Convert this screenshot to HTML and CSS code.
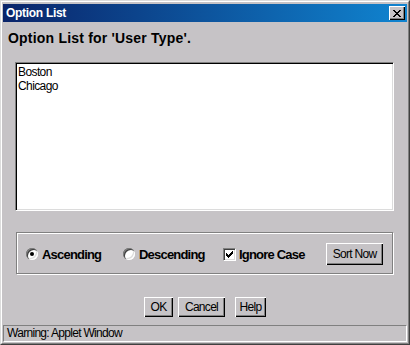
FILE: index.html
```html
<!DOCTYPE html>
<html lang="en">
<head>
	<meta charset="UTF-8">
	<title>Option List</title>
	<link rel="stylesheet" href="styles.css">
</head>
<body>
	<div class="window">
		<div class="frame">
			<div class="titlebar">
				<span class="title">Option List</span>
				<span class="close">
					<svg width="8" height="7" viewBox="0 0 8 7"><path d="M0 0h2v1H0z M6 0h2v1H6z M1 1h2v1H1z M5 1h2v1H5z M2 2h4v1H2z M3 3h2v1H3z M2 4h4v1H2z M1 5h2v1H1z M5 5h2v1H5z M0 6h2v1H0z M6 6h2v1H6z" fill="#000"/></svg>
				</span>
			</div>
			<div class="body">
				<h1 class="heading">Option List for 'User Type'.</h1>
				<div class="listbox">
					<div class="item">Boston</div>
					<div class="item">Chicago</div>
				</div>
				<div class="sortpanel">
					<label class="opt"><span class="radio checked"></span>Ascending</label>
					<label class="opt"><span class="radio"></span>Descending</label>
					<label class="opt"><span class="check"><svg width="7" height="7" viewBox="0 0 7 7"><path d="M6 0h1v1H6z M5 1h2v1H5z M0 2h1v1H0z M4 2h3v1H4z M0 3h2v1H0z M3 3h3v1H3z M0 4h5v1H0z M1 5h3v1H1z M2 6h1v1H2z" fill="#000"/></svg></span>Ignore Case</label>
					<button class="btn btn-sort">Sort Now</button>
				</div>
				<div class="actions">
					<button class="btn btn-ok">OK</button>
					<button class="btn btn-cancel">Cancel</button>
					<button class="btn btn-help">Help</button>
				</div>
			</div>
			<div class="status">Warning: Applet Window</div>
		</div>
	</div>
</body>
</html>
```

FILE: styles.css
```css
body{margin:0;font-family:"Liberation Sans",Arial,sans-serif;}

.window{width:410px;height:345px;box-sizing:border-box;border:1px solid;border-color:#dcdcdc #404040 #404040 #dcdcdc;}
.frame{height:100%;box-sizing:border-box;border:1px solid;border-color:#fff #808080 #808080 #fff;padding:2px 1px 1px 1px;display:flex;flex-direction:column;background:#c6c3c6;}

/* title bar */
.titlebar{height:18px;flex:none;display:flex;align-items:center;justify-content:space-between;padding:0 2px 0 3px;background:linear-gradient(to right,#0a246a,#1084d0);}
.title{color:#fff;font-weight:bold;font-size:12px;line-height:18px;letter-spacing:-0.3px;}
.close{width:16px;height:14px;box-sizing:border-box;display:flex;align-items:center;justify-content:center;background:#c6c3c6;box-shadow:inset 1px 1px #fff,inset -1px -1px #000,inset -2px -2px #808080;}
.close svg{display:block;margin:0 1px 0 0;}

.body{flex:1;display:flex;flex-direction:column;}
.heading{margin:8px 0 0 5px;font-size:14px;line-height:16px;font-weight:bold;letter-spacing:0.2px;}

/* list */
.listbox{margin:16px 13px 0 12px;height:149px;box-sizing:border-box;background:#fff;border:1px solid;border-color:#808080 #fff #fff #808080;box-shadow:inset 1px 1px #000,inset -1px -1px #dcdcdc;padding:2px 2px;}
.item{font-size:12px;line-height:14px;letter-spacing:-0.6px;}

/* sort options */
.sortpanel{margin:21px 14px 0 13px;height:42px;box-sizing:border-box;border:1px solid #808080;box-shadow:inset 1px 1px #fff,1px 1px #fff;padding:2px 0 0 9px;display:grid;grid-template-columns:97px 100px 103px 57px;align-items:center;}
.opt{display:flex;align-items:center;gap:4px;font-size:13px;font-weight:bold;letter-spacing:-0.8px;}
.radio{width:12px;height:12px;flex:none;border-radius:50%;background:#fff;box-shadow:inset 1px 1px #808080,inset 2px 2px #404040,inset -1px -1px #fff,inset -2px -2px #dcdcdc;display:flex;align-items:center;justify-content:center;}
.radio.checked::after{content:"";width:4px;height:4px;border-radius:50%;background:#000;}
.check{width:13px;height:13px;flex:none;box-sizing:border-box;margin-right:-1px;background:#fff;border:1px solid;border-color:#808080 #fff #fff #808080;box-shadow:inset 1px 1px #404040,inset -1px -1px #dcdcdc;display:flex;align-items:center;justify-content:center;}
.check svg{display:block;}

/* buttons */
.btn{height:20px;box-sizing:border-box;padding:0;border:none;background:#c6c3c6;font-family:"Liberation Sans",Arial,sans-serif;font-size:12px;letter-spacing:-0.7px;color:#000;box-shadow:inset 1px 1px #fff,inset -1px -1px #000,inset -2px -2px #808080;}
.btn-sort{width:57px;height:22px;}
.actions{margin-top:23px;display:flex;justify-content:center;gap:5px;}
.btn-ok{width:29px;}
.btn-cancel{width:47px;}
.btn-help{width:31px;margin-left:5px;}

/* status */
.status{margin-top:8px;height:17px;box-sizing:border-box;border:1px solid;border-color:#808080 #fff #fff #808080;padding:0 3px;font-size:12px;line-height:15px;letter-spacing:-0.7px;}
```
